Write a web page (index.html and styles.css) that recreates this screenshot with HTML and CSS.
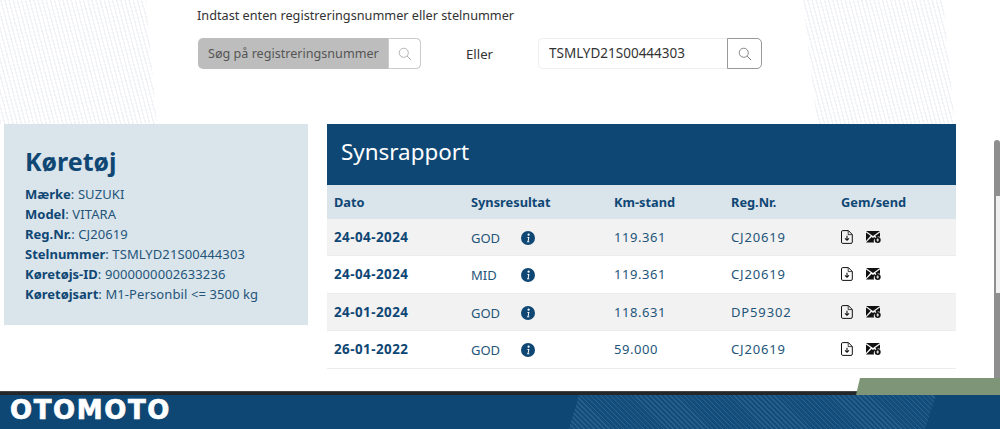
FILE: index.html
```html
<!DOCTYPE html>
<html lang="da">
<head>
<meta charset="utf-8">
<title>Synsrapport</title>
<link rel="stylesheet" href="styles.css">
</head>
<body>
<svg class="defs" width="0" height="0" aria-hidden="true">
  <symbol id="i-search" viewBox="0 0 16 16"><circle cx="6.6" cy="6.6" r="5.2" fill="none" stroke="currentColor" stroke-width="1"/><path d="M10.4 10.4 15 15" fill="none" stroke="currentColor" stroke-width="1.1"/></symbol>
  <symbol id="i-info" viewBox="0 0 14 14"><circle cx="7" cy="7" r="7" fill="#0f4774"/><circle cx="7.6" cy="3.7" r="1.1" fill="#fff"/><path d="M6.5 6h1.9l-.8 4.4h.8v.9H5.9l.1-.9h.6l.6-3.5h-.8z" fill="#fff"/></symbol>
  <symbol id="i-file" viewBox="0 0 12 14"><path d="M1.8.6h5.6l3.9 3.9v7.6a1.3 1.3 0 0 1-1.3 1.3H1.8a1.3 1.3 0 0 1-1.3-1.3V1.9A1.3 1.3 0 0 1 1.8.6z" fill="none" stroke="#111" stroke-width="1"/><path d="M7.2.8v3.8h3.9" fill="none" stroke="#111" stroke-width=".8"/><path d="M6 5.8v4.4M4 8.3l2 2 2-2" fill="none" stroke="#111" stroke-width="1.1"/></symbol>
  <symbol id="i-mail" viewBox="0 0 15 12"><path d="M0 0h14L7 5z" fill="#111"/><path d="M0 1.6V10l4.6-5.2zM14 1.6v4.2a3.6 3.6 0 0 0-3.6.6L9.4 4.8zM0 11.6h8.1a3.6 3.6 0 0 1 1.2-4.4L8.4 5.9 7 7 5.6 5.9z" fill="#111"/><circle cx="11.7" cy="9" r="3" fill="#111"/><path d="M11.7 7.4v3.2M10.4 9h2.6" stroke="#fff" stroke-width=".9"/></symbol>
</svg>

<div class="page">
  <section class="search">
    <p class="search-intro">Indtast enten registreringsnummer eller stelnummer</p>
    <div class="search-row">
      <div class="field field-disabled">
        <span class="field-text">Søg på registreringsnummer</span>
        <span class="field-btn"><svg class="search-icon"><use href="#i-search"/></svg></span>
      </div>
      <span class="search-or">Eller</span>
      <div class="field field-active">
        <span class="field-text">TSMLYD21S00444303</span>
        <span class="field-btn"><svg class="search-icon"><use href="#i-search"/></svg></span>
      </div>
    </div>
  </section>

  <main class="content">
    <aside class="vehicle">
      <h2 class="vehicle-title">Køretøj</h2>
      <p class="vehicle-line"><b>Mærke</b>: SUZUKI</p>
      <p class="vehicle-line"><b>Model</b>: VITARA</p>
      <p class="vehicle-line"><b>Reg.Nr.</b>: CJ20619</p>
      <p class="vehicle-line"><b>Stelnummer</b>: TSMLYD21S00444303</p>
      <p class="vehicle-line"><b>Køretøjs-ID</b>: 9000000002633236</p>
      <p class="vehicle-line"><b>Køretøjsart</b>: M1-Personbil &lt;= 3500 kg</p>
    </aside>

    <section class="report">
      <h1 class="report-title">Synsrapport</h1>
      <div class="row row-head">
        <span>Dato</span><span>Synsresultat</span><span>Km-stand</span><span>Reg.Nr.</span><span>Gem/send</span>
      </div>
      <div class="row row-a">
        <b class="date">24-04-2024</b>
        <span class="result"><span class="result-text">GOD</span><svg class="info"><use href="#i-info"/></svg></span>
        <span class="km">119.361</span><span class="reg">CJ20619</span>
        <span class="actions"><svg class="file"><use href="#i-file"/></svg><svg class="mail"><use href="#i-mail"/></svg></span>
      </div>
      <div class="row row-b">
        <b class="date">24-04-2024</b>
        <span class="result"><span class="result-text">MID</span><svg class="info"><use href="#i-info"/></svg></span>
        <span class="km">119.361</span><span class="reg">CJ20619</span>
        <span class="actions"><svg class="file"><use href="#i-file"/></svg><svg class="mail"><use href="#i-mail"/></svg></span>
      </div>
      <div class="row row-a">
        <b class="date">24-01-2024</b>
        <span class="result"><span class="result-text">GOD</span><svg class="info"><use href="#i-info"/></svg></span>
        <span class="km">118.631</span><span class="reg">DP59302</span>
        <span class="actions"><svg class="file"><use href="#i-file"/></svg><svg class="mail"><use href="#i-mail"/></svg></span>
      </div>
      <div class="row row-b">
        <b class="date">26-01-2022</b>
        <span class="result"><span class="result-text">GOD</span><svg class="info"><use href="#i-info"/></svg></span>
        <span class="km">59.000</span><span class="reg">CJ20619</span>
        <span class="actions"><svg class="file"><use href="#i-file"/></svg><svg class="mail"><use href="#i-mail"/></svg></span>
      </div>
    </section>
  </main>
</div>

<footer class="footer">
  <div class="footer-bar"></div>
  <div class="footer-main"><span class="logo">OTOMOTO</span></div>
</footer>
<div class="scrollbar"><div class="scrollbar-gap"></div></div>
</body>
</html>
```

FILE: styles.css
```css
* { box-sizing: border-box; }
html, body { margin: 0; height: 100%; }
body {
  position: relative;
  width: 1000px;
  height: 429px;
  overflow: hidden;
  background: #fff;
  font-family: "Noto Sans", "Liberation Sans", sans-serif;
  color: #245579;
  display: flex;
  flex-direction: column;
}
.defs { position: absolute; }
.page { flex: 1; position: relative; }

.page::before, .page::after {
  content: "";
  position: absolute;
  top: 0;
  height: 124px;
  background: repeating-linear-gradient(75deg, #f1f3f6 0 1.5px, #fff 1.5px 4px);
}
.page::before { left: 0; width: 157px; clip-path: polygon(0 0, 146px 0, 100% 100%, 0 100%); }
.page::after { left: 803px; width: 152px; clip-path: polygon(0 0, 140px 0, 100% 100%, 14px 100%); }

.search {
  position: relative;
  z-index: 1;
  height: 124px;
  padding: 6px 0 0 197px;
}
.search-intro {
  margin: 0;
  height: 18px;
  font-size: 12.7px;
  line-height: 18px;
  color: #333;
}
.search-row {
  display: flex;
  align-items: center;
  margin-top: 14px;
  padding-left: 1px;
}
.field {
  display: flex;
  height: 31px;
  font-size: 13.5px;
  border-radius: 5px;
}
.field-disabled { width: 223px; background: #bdbdbd; color: #555; font-size: 12.6px; }
.field-active { width: 224px; border: 1px solid #eee; border-right: 0; color: #333; }
.field-text {
  flex: 1;
  min-width: 0;
  margin: 0 6px 0 10px;
  line-height: 31px;
  white-space: nowrap;
  overflow: hidden;
}
.field-active .field-text { line-height: 29px; }
.field-btn {
  display: flex;
  flex: none;
  align-items: center;
  justify-content: center;
  background: #fff;
  border: 1px solid #ccc;
  border-radius: 0 5px 5px 0;
}
.field-disabled .field-btn { width: 33px; color: #aaa; }
.field-active .field-btn { width: 35px; height: 31px; margin-top: -1px; border-color: #999; color: #777; }
.search-icon { width: 14px; height: 14px; }
.search-or {
  width: 117px;
  padding-left: 45px;
  font-size: 13.2px;
  color: #333;
}

.content {
  position: relative;
  z-index: 1;
  display: flex;
  align-items: flex-start;
  gap: 19px;
  padding-left: 4px;
}
.vehicle {
  width: 304px;
  height: 201px;
  background: #dae4eb;
  padding: 21px 0 0 21px;
}
.vehicle-title {
  margin: 0 0 6px;
  height: 33px;
  font-size: 25px;
  line-height: 33px;
  font-weight: 700;
  color: #0f4774;
}
.vehicle-line {
  margin: 0;
  height: 20px;
  font-size: 13px;
  line-height: 20px;
  white-space: nowrap;
  letter-spacing: .1px;
}
.vehicle-line b { font-weight: 700; color: #0f4774; letter-spacing: 0; }

.report { width: 628.5px; }
.report-title {
  margin: 0;
  height: 61px;
  padding-left: 14px;
  background: #0f4774;
  color: #fff;
  font-size: 22.4px;
  font-weight: 400;
  line-height: 56px;
}
.row {
  display: grid;
  grid-template-columns: 137px 143px 117px 110px 1fr;
  align-items: center;
  padding-left: 7px;
  height: 37.25px;
  font-size: 13px;
  border-bottom: 1px solid #ececec;
}
.row:last-child { height: 38px; }
.row-head {
  height: 34px;
  background: #dae4eb;
  border-bottom: 0;
  font-size: 12.8px;
  font-weight: 700;
  color: #0f4774;
}
.row-a { background: #f2f2f2; }
.row-b { background: #fff; }
.date { font-weight: 700; color: #0f4774; font-size: 13.4px; letter-spacing: .45px; }
.km { letter-spacing: .55px; }
.reg { letter-spacing: .85px; }
.result { display: flex; align-items: center; }
.result-text { width: 50px; padding-top: 2px; }
.info { width: 14px; height: 14px; margin-top: 2px; }
.actions { display: flex; align-items: center; gap: 13px; }
.file { width: 12px; height: 14px; }
.mail { width: 15px; height: 12px; }

.footer { position: relative; flex: none; height: 38px; }
.footer-bar {
  height: 4px;
  background: #24272a;
  border-top: 1px solid #444;
}
.footer-bar::after {
  content: "";
  position: absolute;
  right: 0;
  top: -13px;
  width: 144px;
  height: 17px;
  background: #7f9577;
  clip-path: polygon(4px 0, 100% 0, 100% 100%, 0 100%);
}
.footer-main {
  position: relative;
  height: 34px;
  background: #0f4774;
  padding: 2px 0 0 10px;
}
.footer-main::after {
  content: "";
  position: absolute;
  left: 569px;
  top: 0;
  width: 367px;
  height: 100%;
  background: repeating-linear-gradient(45deg, #2a618c 0 1px, #124d7c 1px 3.5px);
  clip-path: polygon(10px 0, 100% 0, 356px 100%, 0 100%);
}
.logo {
  display: block;
  font-family: "DejaVu Sans", sans-serif;
  font-size: 26px;
  font-weight: 700;
  line-height: 26px;
  letter-spacing: 1.6px;
  color: #fff;
  -webkit-text-stroke: .7px #fff;
}

.scrollbar {
  position: absolute;
  left: 994px;
  top: 140px;
  width: 6px;
  height: 238px;
  background: #8f8f8f;
  border-radius: 3px 3px 0 0;
  padding-top: 56px;
  z-index: 2;
}
.scrollbar-gap {
  height: 97px;
  margin-left: 2px;
  background: #f0f0f0;
}
```
